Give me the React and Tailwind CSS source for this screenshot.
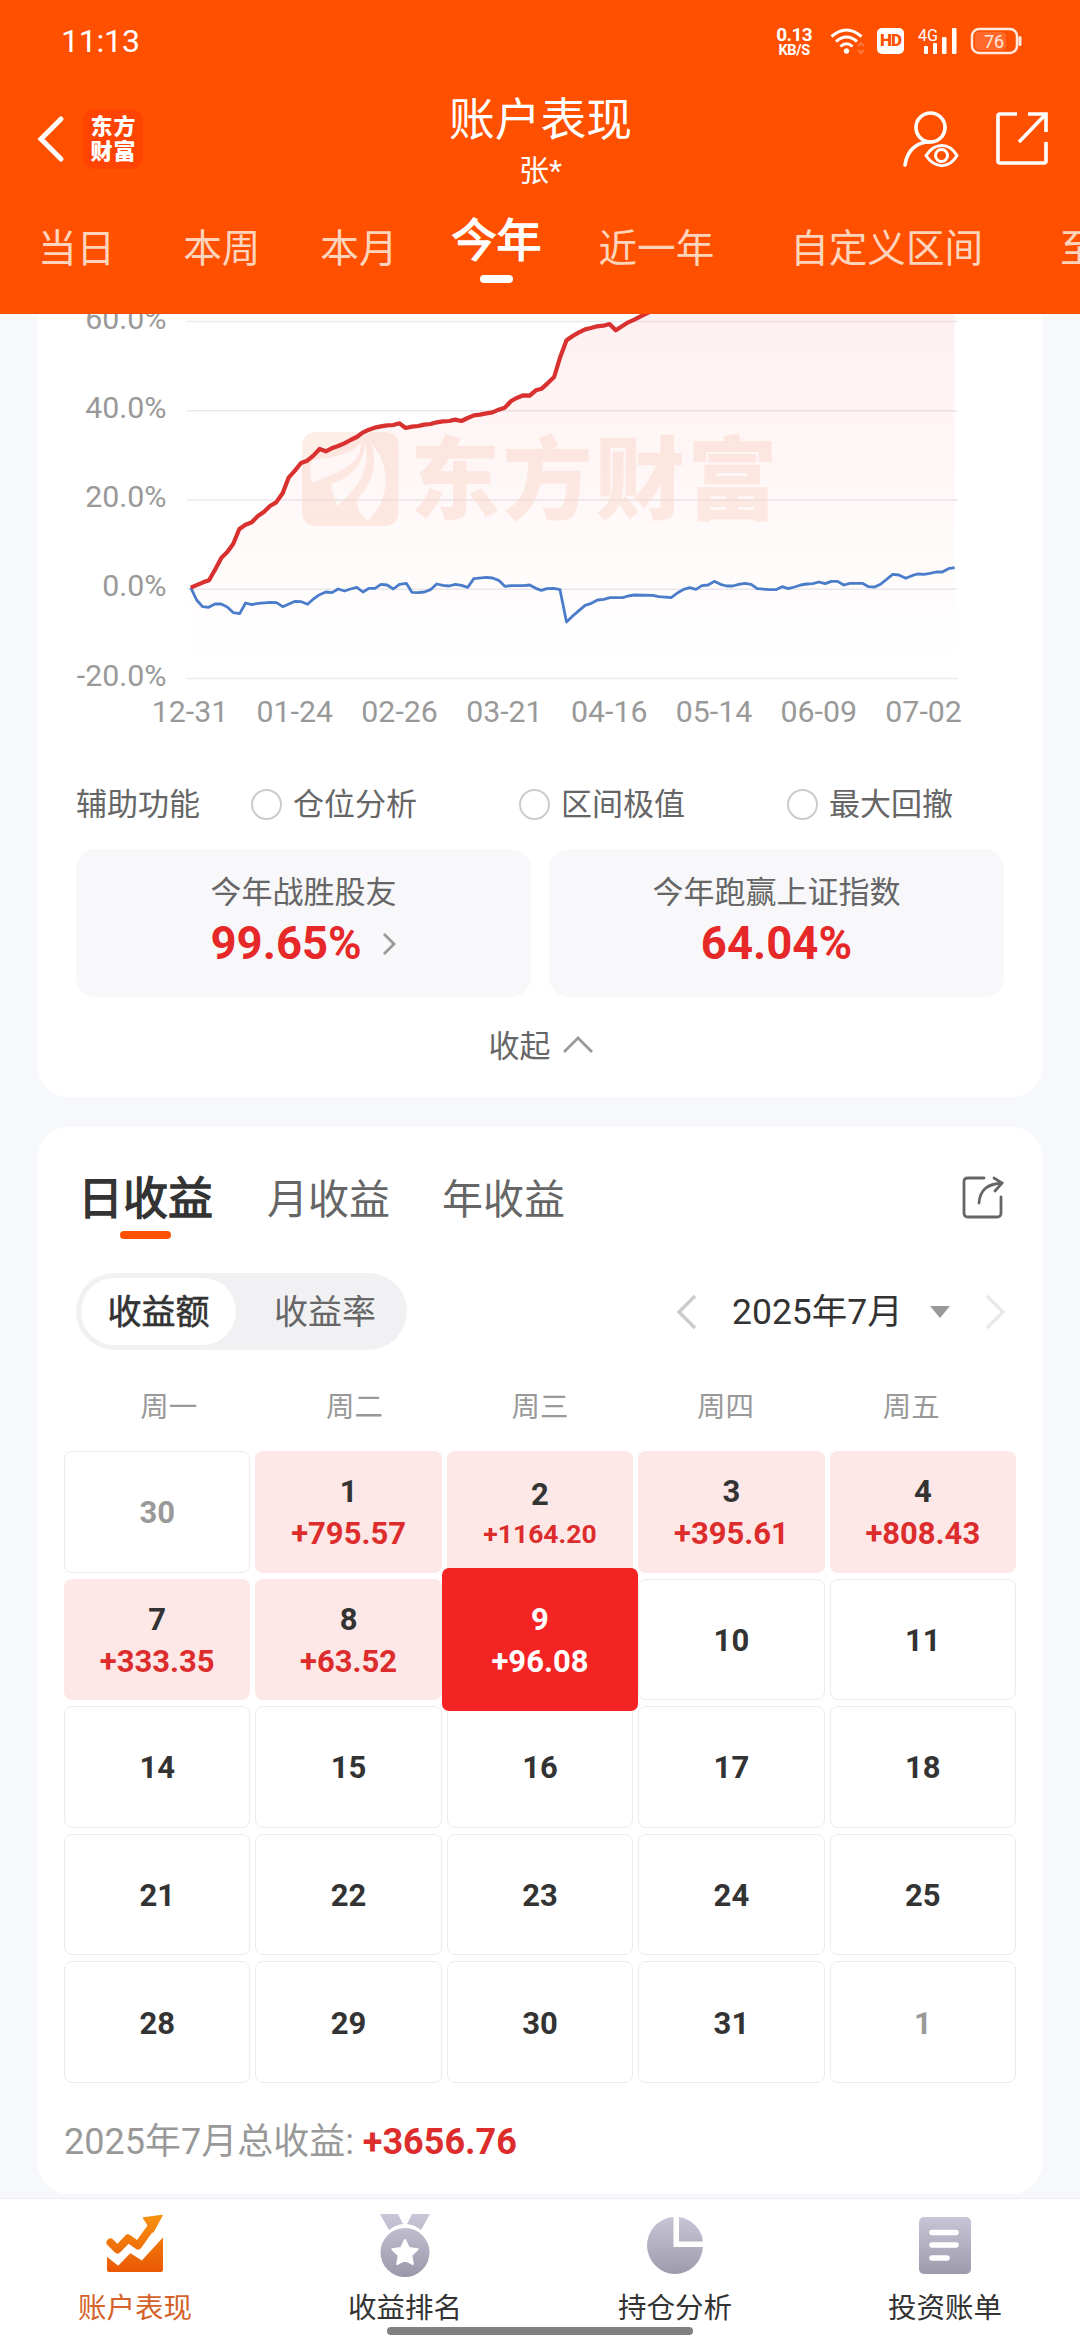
import React, { useState } from 'react';

const periods = [
  { name: '当日', space: 'ml-[38px]' },
  { name: '本周', space: 'ml-[68px]' },
  { name: '本月', space: 'ml-[60px]' },
  { name: '今年', space: 'ml-[54px]' },
  { name: '近一年', space: 'ml-[57px]' },
  { name: '自定义区间', space: 'ml-[76px]' },
  { name: '至今', space: 'ml-[77px]' },
];

const weekdays = ['周一', '周二', '周三', '周四', '周五'];

const days = [
  { day: 30, muted: true },
  { day: 1, profit: '+795.57' },
  { day: 2, profit: '+1164.20' },
  { day: 3, profit: '+395.61' },
  { day: 4, profit: '+808.43' },
  { day: 7, profit: '+333.35' },
  { day: 8, profit: '+63.52' },
  { day: 9, profit: '+96.08', selected: true },
  { day: 10 },
  { day: 11 },
  { day: 14 },
  { day: 15 },
  { day: 16 },
  { day: 17 },
  { day: 18 },
  { day: 21 },
  { day: 22 },
  { day: 23 },
  { day: 24 },
  { day: 25 },
  { day: 28 },
  { day: 29 },
  { day: 30 },
  { day: 31 },
  { day: 1, muted: true },
];

// Account yield and index yield, in the units of the inner plot viewBox
const accountLine =
  '554,863 590,847 607,841 626,806 643,773 660,756 677,732 695,687 713,674 731,667 748,649 766,636 784,618 802,607 821,579 838,533 857,511 874,489 892,482 910,467 928,447 946,454 963,445 982,438 1000,430 1018,420 1036,411 1053,398 1071,389 1088,383 1106,379 1124,376 1142,375 1160,370 1178,384 1196,380 1214,378 1232,374 1250,372 1268,367 1286,364 1304,363 1322,359 1340,363 1358,354 1376,346 1394,344 1412,340 1430,337 1448,329 1466,323 1484,303 1502,293 1520,286 1538,287 1556,271 1573,266 1590,250 1609,231 1627,170 1645,121 1663,108 1681,97 1699,88 1716,84 1734,79 1752,77 1770,72 1788,91 1806,79 1824,67 1842,59 1860,49 1880,39 1960,0 2772,-200';
const indexLine =
  '554,863 571,900 588,920 606,922 624,912 642,912 660,921 678,938 696,941 713,909 731,914 749,910 785,907 803,908 821,920 839,912 857,904 875,905 893,913 910,897 928,884 946,876 964,878 982,867 1000,873 1018,867 1036,862 1054,876 1071,865 1089,865 1106,853 1124,855 1142,867 1160,853 1180,850 1196,877 1214,878 1232,876 1250,869 1268,852 1286,856 1304,858 1322,853 1340,856 1358,862 1376,836 1412,832 1430,834 1448,841 1466,859 1484,857 1520,857 1538,855 1556,865 1572,871 1588,866 1608,865 1626,869 1645,966 1663,948 1681,932 1699,916 1717,910 1735,900 1753,898 1771,893 1808,893 1824,888 1842,885 1895,886 1913,890 1949,893 1967,879 1985,868 2003,863 2021,868 2038,857 2056,855 2074,844 2092,853 2110,858 2127,858 2145,853 2163,850 2181,853 2199,866 2235,869 2253,869 2271,860 2289,866 2307,861 2325,855 2342,852 2360,851 2378,846 2396,851 2414,844 2432,844 2450,855 2468,850 2504,850 2522,860 2540,861 2558,852 2592,823 2610,825 2630,835 2648,827 2664,822 2683,823 2700,820 2718,816 2736,816 2754,806 2772,803';

const yLabels = ['60.0%', '40.0%', '20.0%', '0.0%', '-20.0%'];
const xLabels = ['12-31', '01-24', '02-26', '03-21', '04-16', '05-14', '06-09', '07-02'];

const StatusBar = () => (
  <div className="flex h-[81px] items-center pl-[61px] pr-[58px] text-white">
    <span className="text-[32px] tracking-[-0.2px]">11:13</span>
    <div className="ml-auto flex flex-col items-center pt-[2px] font-bold">
      <span className="text-[19px] leading-[18px] tracking-[-0.6px]">0.13</span>
      <span className="text-[14.5px] leading-[14px] tracking-[-0.4px]">KB/S</span>
    </div>
    <svg className="ml-[18px]" width="35" height="28" viewBox="0 0 35 28" fill="none" stroke="#fff" strokeWidth="3">
      <path d="M1.500 9.500Q16.500-3.500 31.500 9.500" />
      <path d="M6 14.500Q16.500 5.500 27 14.500" />
      <path d="M10.500 19.500Q16.500 14 22.500 19.500" />
      <circle cx="16.500" cy="24" r="2.700" fill="#fff" stroke="none" />
      <path d="M28 19l3-3 3 3M28 23l3 3 3-3" stroke="#ff7a40" strokeWidth="2" />
    </svg>
    <span className="ml-3 flex h-[26px] w-[27px] items-center justify-center rounded-[5px] bg-white text-[17px] font-black tracking-[-1px] text-[#ff5000]">
      HD
    </span>
    <svg className="ml-[14px] overflow-visible" width="40" height="28" viewBox="0 0 40 28" fill="#fff">
      <text x="0" y="14" fontSize="17" textLength="20" lengthAdjust="spacingAndGlyphs">4G</text>
      <rect x="6" y="19" width="4" height="8" rx="1" />
      <rect x="15" y="16" width="4" height="11" rx="1" />
      <rect x="24" y="10" width="4.500" height="17" rx="1" />
      <rect x="34" y="1" width="4.500" height="26" rx="1" />
    </svg>
    <svg className="ml-[12px]" width="52" height="28" viewBox="0 0 52 28">
      <rect x="2" y="2" width="45" height="24" rx="7" fill="none" stroke="#ffe9df" strokeWidth="2.500" />
      <rect x="5" y="5" width="31" height="18" rx="4" fill="#ff6a2b" />
      <rect x="48.500" y="9" width="3" height="10" rx="1.500" fill="#ffe9df" />
      <text x="24" y="20.500" fontSize="18" textAnchor="middle" fill="#ffe9df">76</text>
    </svg>
  </div>
);

const Header = ({ period, onChange }) => (
  <header className="h-[314px] overflow-hidden bg-[#ff5000]">
    <StatusBar />
    <div className="flex h-[113px] items-center">
      <div className="flex w-[360px] items-center pt-[2px] pl-[37px]">
        <svg width="28" height="48" viewBox="0 0 28 48" fill="none" stroke="#fff" strokeWidth="5" strokeLinecap="round">
          <path d="M24 4L4 24l20 20" />
        </svg>
        <div className="ml-[18px] grid h-[60px] w-[60px] grid-cols-[22px_22px] content-center justify-center gap-x-px rounded-[12px] bg-[#ff4300] text-[22px] leading-[25px] font-black text-white">
          <span>东</span>
          <span>方</span>
          <span>财</span>
          <span>富</span>
        </div>
      </div>
      <div className="flex w-[360px] flex-col items-center pt-[12px] pl-px text-white">
        <h1 className="text-[45.8px] leading-[54px]">账户表现</h1>
        <p className="text-[30px] leading-[46px]">张*</p>
      </div>
      <div className="flex w-[360px] justify-end pt-[2px] pr-[31px]">
        <svg width="60" height="58" viewBox="0 0 60 58" fill="none" stroke="#fff" strokeWidth="3.600" strokeLinecap="round">
          <circle cx="29.500" cy="17.500" r="14.500" />
          <path d="M4 55C6 40 16 32 29 32" />
          <path d="M25 45.500C34 32 48 32 56 45.500C48 59 34 59 25 45.500Z" strokeWidth="3" />
          <circle cx="40.500" cy="45.500" r="6" strokeWidth="3" />
        </svg>
        <svg className="ml-[34px]" width="54" height="56" viewBox="0 0 54 56" fill="none" stroke="#fff" strokeWidth="3.600">
          <path d="M22 4H5Q3 4 3 6V51Q3 53 5 53H49Q51 53 51 51V32" />
          <path d="M33 4H51V22M51 4L24 32" />
        </svg>
      </div>
    </div>
    <nav className="flex h-[120px] whitespace-nowrap">
      {periods.map((p) => (
        <button
          key={p.name}
          onClick={() => onChange(p.name)}
          className={`flex shrink-0 flex-col items-center ${p.space} ${
            p.name === period
              ? 'text-[45px] text-white [-webkit-text-stroke:1.5px_white]'
              : 'text-[38.6px] text-[#ffd4bd]'
          }`}
        >
          <span className={p.name === period ? 'mt-[18px] leading-[60px]' : 'mt-[27px] leading-[56px]'}>{p.name}</span>
          {p.name === period && <span className="mt-[3px] h-2 w-[33px] rounded-full bg-white" />}
        </button>
      ))}
    </nav>
  </header>
);

const YieldChart = () => (
  <svg className="block" width="1080" height="436" viewBox="0 314 1080 436">
    <defs>
      <linearGradient id="area" gradientUnits="userSpaceOnUse" x1="0" y1="0" x2="0" y2="1110">
        <stop offset="0" stopColor="#f42424" stopOpacity="0.07" />
        <stop offset="1" stopColor="#f42424" stopOpacity="0" />
      </linearGradient>
    </defs>
    {yLabels.map((label, i) => (
      <g key={label}>
        <line x1="187" x2="958" y1={321.5 + i * 89.25} y2={321.5 + i * 89.25} stroke="#e9e9ef" strokeWidth="1.500" />
        <text x="166.500" y={328.5 + i * 89.25} fontSize="30.300" textAnchor="end" fill="#999">
          {label}
        </text>
      </g>
    ))}
    {/* watermark */}
    <g fill="#fbd9cc" opacity="0.45">
      <path
        fillRule="evenodd"
        d="M317 432H384Q398.500 432 398.500 447V511Q398.500 526 384 526H317Q302 526 302 511V447Q302 432 317 432Z
           M312 483Q308 462 314 460Q350 456 361 443C362 465 338 472 312 483Z
           M337 506Q332 490 331 484C352 478 364 462 365 443C372 470 356 490 337 506Z
           M368 521Q356 512 357 500C373 482 378 465 371 443C389 463 393 495 368 521Z"
      />
      <text x="410" y="512" fontSize="90" fontWeight="900" letterSpacing="2.500">东方财富</text>
    </g>
    <svg x="0" y="300" width="1080" height="440" viewBox="0 0 3136 1320" preserveAspectRatio="none" fill="none">
      <polygon points={`${accountLine} 2772,1110 554,1110`} fill="url(#area)" />
      <polyline points={indexLine} stroke="#4a7cc9" strokeWidth="2.800" vectorEffect="non-scaling-stroke" strokeLinejoin="round" />
      <polyline points={accountLine} stroke="#d93030" strokeWidth="4.200" vectorEffect="non-scaling-stroke" strokeLinejoin="round" />
    </svg>
    {xLabels.map((label, i) => (
      <text key={label} x={190 + i * 104.8} y="722" fontSize="30.300" textAnchor="middle" fill="#999">
        {label}
      </text>
    ))}
  </svg>
);

const Option = ({ label }) => (
  <label className="flex w-[268px] shrink-0 items-center">
    <span className="mr-[11px] mb-[2px] h-[31px] w-[31px] rounded-full border-2 border-[#ccc]" />
    {label}
  </label>
);

const PerformanceCard = () => (
  <section className="h-[783px] overflow-hidden rounded-b-[30px] bg-white px-[38px] text-[31px] text-[#666]">
    <div className="-mx-[76px]">
      <YieldChart />
    </div>
    <div className="mt-[32px] flex h-[46px] items-center whitespace-nowrap">
      <span className="w-[175px] shrink-0">辅助功能</span>
      <Option label="仓位分析" />
      <Option label="区间极值" />
      <Option label="最大回撤" />
    </div>
    <div className="mt-[21px] grid grid-cols-2 gap-[18px]">
      <div className="flex h-[148px] flex-col items-center rounded-[20px] bg-[#f8f8fb] pt-[23px]">
        <span className="leading-[42px]">今年战胜股友</span>
        <div className="flex w-[186px] items-center justify-between">
          <span className="text-[45.5px] leading-[60px] font-bold text-[#e62829]">99.65%</span>
          <svg width="15" height="24" viewBox="0 0 15 24" fill="none" stroke="#999" strokeWidth="2.800">
            <path d="M2 2l10 10L2 22" />
          </svg>
        </div>
      </div>
      <div className="flex h-[148px] flex-col items-center rounded-[20px] bg-[#f8f8fb] pt-[23px]">
        <span className="leading-[42px]">今年跑赢上证指数</span>
        <span className="text-[45.5px] leading-[60px] font-bold text-[#e62829]">64.04%</span>
      </div>
    </div>
    <div className="mt-[27px] flex h-[46px] items-center justify-center pl-[2px]">
      收起
      <svg className="mb-[5px] ml-[11px]" width="32" height="20" viewBox="0 0 32 20" fill="none" stroke="#999" strokeWidth="2.800">
        <path d="M2 17L16 3l14 14" />
      </svg>
    </div>
  </section>
);

const DayCell = ({ day, profit, muted, selected }) => {
  if (selected) {
    return (
      <div className="relative z-10 -mx-[5px] -my-[10.5px] flex flex-col items-center justify-center rounded-[7px] bg-[#f42424] pt-[3px] leading-[42px] text-white">
        <span>{day}</span>
        <span>{profit}</span>
      </div>
    );
  }
  return (
    <div
      className={`flex flex-col items-center justify-center rounded-[8px] pt-[3px] leading-[42px] ${
        profit ? 'bg-[#fde8e7]' : 'border border-[#ececec]'
      } ${muted ? 'text-[#999]' : 'text-[#333]'}`}
    >
      <span>{day}</span>
      {profit && (
        <span className={`text-[#dc2c2c] ${profit.length > 7 ? 'text-[26.5px] leading-[36px]' : ''}`}>{profit}</span>
      )}
    </div>
  );
};

const ProfitCard = () => (
  <section className="mt-[30px] h-[1067px] rounded-[30px] bg-white px-[26px]">
    <div className="flex h-[146px] pt-[44px] pr-[10px] pl-[14px] text-[41px] text-[#666]">
      <div className="flex flex-col items-center text-[45px] text-[#333] [-webkit-text-stroke:1.3px_#333]">
        <span className="leading-[58px]">日收益</span>
        <span className="mt-[2px] h-2 w-[51px] rounded-full bg-[#ff5000]" />
      </div>
      <span className="ml-[54px] leading-[58px]">月收益</span>
      <span className="ml-[52px] leading-[58px]">年收益</span>
      <svg className="mt-[2px] ml-auto" width="46" height="48" viewBox="0 0 46 48" fill="none" stroke="#666" strokeWidth="2.800" strokeLinecap="round">
        <path d="M24 5H8Q4 5 4 9V40Q4 44 8 44H37Q41 44 41 40V24" />
        <path d="M19 30C20 17 27 11 42 10M34 5l8 5-7 8" />
      </svg>
    </div>
    <div className="flex h-[77px] items-center pl-[12px]">
      <div className="flex h-[77px] w-[331px] items-center rounded-full bg-[#f1f1f4] p-[5px] text-[34px] text-[#666]">
        <button className="h-[67px] w-[155px] rounded-full bg-white pt-[2px] text-[#333] [-webkit-text-stroke:0.6px_#333]">
          收益额
        </button>
        <button className="ml-[38px] pt-[2px]">收益率</button>
      </div>
      <svg className="ml-[268px]" width="22" height="36" viewBox="0 0 22 36" fill="none" stroke="#ccc" strokeWidth="3.500">
        <path d="M20 2L4 18l16 16" />
      </svg>
      <span className="ml-[35px] pt-[3px] text-[35.5px] text-[#333]">2025年7月</span>
      <svg className="ml-auto" width="20" height="12" viewBox="0 0 20 12">
        <path d="M0 0h20L10 12z" fill="#999" />
      </svg>
      <svg className="mr-[9px] ml-[35px]" width="22" height="36" viewBox="0 0 22 36" fill="none" stroke="#e9e9e9" strokeWidth="3.500">
        <path d="M2 2l16 16L2 34" />
      </svg>
    </div>
    <div className="mx-[12px] mt-[36px] grid h-[44px] grid-cols-5 text-center text-[28.5px] leading-[44px] text-[#999]">
      {weekdays.map((name) => (
        <span key={name}>{name}</span>
      ))}
    </div>
    <div className="mt-[21px] grid h-[632px] grid-cols-5 grid-rows-5 gap-x-[5px] gap-y-[6px] text-[31px] font-bold">
      {days.map((item, i) => (
        <DayCell key={i} {...item} />
      ))}
    </div>
    <p className="mt-[33px] text-[36px] leading-[52px] text-[#999]">
      2025年7月总收益: <span className="font-bold text-[#dc2c2c]">+3656.76</span>
    </p>
  </section>
);

const TrendIcon = () => (
  <svg width="62" height="64" viewBox="0 0 62 64" fill="url(#hot)">
    <path d="M3 40l12 8 11-12 12 8 21-25v37q0 2-2 2H5q-2 0-2-2z" />
    <path d="M2.500 40L14 49 26 36.500 37.500 44 59.500 20" fill="none" stroke="#fff" strokeWidth="4" />
    <path d="M6.500 28.500L13.500 35.500 24 24.500 34 31.500 48 12" fill="none" stroke="url(#hot)" strokeWidth="8" strokeLinecap="round" strokeLinejoin="round" />
    <path d="M39.500 4L58 1.500 49 18z" stroke="url(#hot)" strokeWidth="1.500" strokeLinejoin="round" />
  </svg>
);

const MedalIcon = () => (
  <svg width="62" height="64" viewBox="0 0 62 64" fill="url(#cool)">
    <path d="M6 0h18l5 10q-8 1-14 6zM56 0H38l-5 10q8 1 14 6z" />
    <circle cx="31" cy="38.500" r="24.500" />
    <path
      d="M31 26l3.900 8 8.800 1.200-6.400 6.100 1.500 8.700-7.800-4.100-7.800 4.100 1.500-8.700-6.400-6.100 8.800-1.200z"
      fill="#fff"
      stroke="#fff"
      strokeWidth="2"
      strokeLinejoin="round"
    />
  </svg>
);

const PieIcon = () => (
  <svg width="62" height="64" viewBox="0 0 62 64" fill="url(#cool)">
    <path d="M29.500 3A28 28.500 0 1 0 59 33H29.500z" />
    <path d="M35 3A28 28 0 0 1 59 27.500H35z" />
  </svg>
);

const BillIcon = () => (
  <svg width="62" height="64" viewBox="0 0 62 64" fill="url(#cool)">
    <rect x="5" y="3" width="52" height="57" rx="5" />
    <path d="M18 18.500h24M18 31h24M18 44h15" stroke="#fff" strokeWidth="5.600" strokeLinecap="round" />
  </svg>
);

const tabs = [
  { name: '账户表现', Icon: TrendIcon },
  { name: '收益排名', Icon: MedalIcon },
  { name: '持仓分析', Icon: PieIcon },
  { name: '投资账单', Icon: BillIcon },
];

const BottomNav = () => (
  <nav className="relative z-10 grid h-[142px] grid-cols-4 border-t border-[#ececef] bg-white">
    <svg className="absolute" width="0" height="0">
      <defs>
        <linearGradient id="hot" gradientUnits="userSpaceOnUse" x1="0" y1="0" x2="0" y2="60">
          <stop offset="0" stopColor="#f7930f" />
          <stop offset="1" stopColor="#e95504" />
        </linearGradient>
        <linearGradient id="cool" gradientUnits="userSpaceOnUse" x1="0" y1="0" x2="0" y2="62">
          <stop offset="0" stopColor="#c9c7d8" />
          <stop offset="1" stopColor="#9b9aab" />
        </linearGradient>
      </defs>
    </svg>
    {tabs.map(({ name, Icon }, i) => (
      <button key={name} className="flex flex-col items-center pt-[15px]">
        <Icon />
        <span className={`mt-[11px] text-[28.5px] leading-[40px] ${i === 0 ? 'text-[#d4622a]' : 'text-[#333]'}`}>{name}</span>
      </button>
    ))}
    <div className="absolute bottom-[5px] left-[387px] h-2 w-[306px] rounded-full bg-[#808080]" />
  </nav>
);

const App = () => {
  const [period, setPeriod] = useState('今年');

  return (
    <div className="flex h-[2340px] w-[1080px] flex-col overflow-hidden bg-[#f7f8fb] font-['Roboto','Noto_Sans_CJK_SC',sans-serif]">
      <Header period={period} onChange={setPeriod} />
      <main className="h-[1884px] overflow-hidden px-[38px]">
        <PerformanceCard />
        <ProfitCard />
      </main>
      <BottomNav />
    </div>
  );
};

export default App;
